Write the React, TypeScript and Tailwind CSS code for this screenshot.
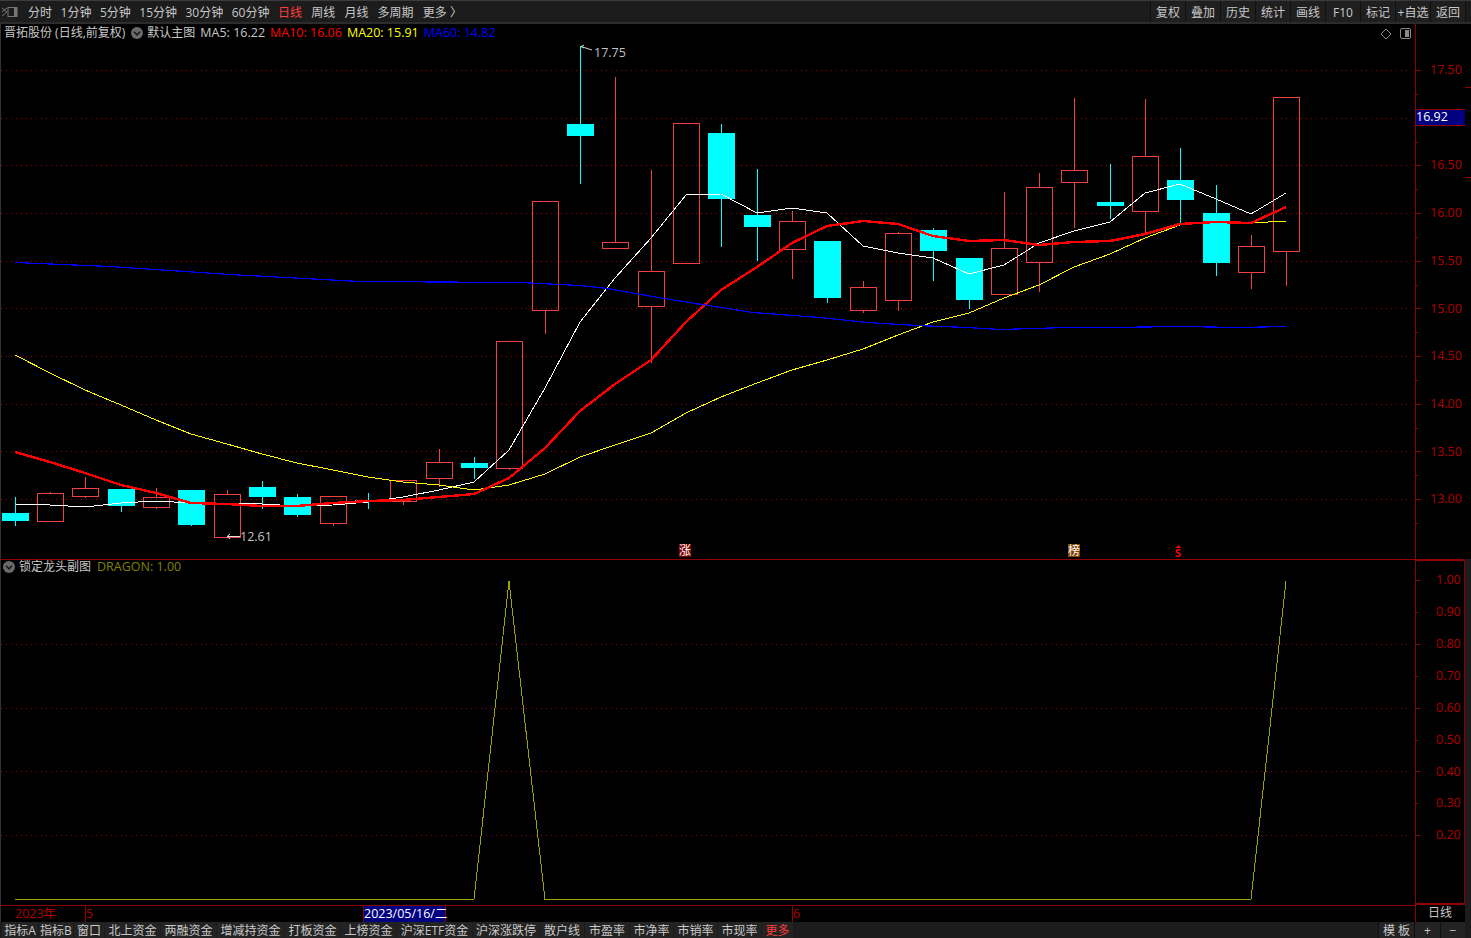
import { FC } from "react";

type Candle = [number, number, number, number, number, "up" | "down"];

// x, wick top, wick bottom, body top, body bottom
const candles: Candle[] = [
  [15, 497, 526, 513, 521, "down"],
  [50, 492, 521, 493, 521, "up"],
  [85, 477, 498, 488, 496, "up"],
  [121, 489, 512, 489, 506, "down"],
  [156, 488, 509, 497, 507, "up"],
  [191, 490, 526, 490, 525, "down"],
  [227, 490, 537, 494, 537, "up"],
  [262, 481, 509, 487, 497, "down"],
  [297, 494, 517, 497, 515, "down"],
  [333, 496, 526, 496, 523, "up"],
  [368, 493, 509, 500, 502, "down"],
  [403, 480, 505, 480, 501, "up"],
  [439, 449, 487, 462, 478, "up"],
  [474, 457, 479, 463, 468, "down"],
  [509, 341, 470, 341, 468, "up"],
  [545, 201, 334, 201, 310, "up"],
  [580, 46, 184, 124, 136, "down"],
  [615, 77, 248, 242, 248, "up"],
  [651, 170, 363, 271, 306, "up"],
  [686, 123, 263, 123, 263, "up"],
  [721, 124, 247, 133, 199, "down"],
  [757, 169, 261, 215, 227, "down"],
  [792, 211, 279, 221, 249, "up"],
  [827, 241, 303, 241, 298, "down"],
  [863, 281, 313, 287, 310, "up"],
  [898, 232, 311, 233, 300, "up"],
  [933, 228, 281, 230, 251, "down"],
  [969, 258, 309, 258, 300, "down"],
  [1004, 192, 294, 248, 294, "up"],
  [1039, 173, 292, 187, 262, "up"],
  [1074, 98, 228, 170, 182, "up"],
  [1110, 164, 219, 202, 206, "down"],
  [1145, 99, 234, 156, 211, "up"],
  [1180, 148, 224, 180, 200, "down"],
  [1216, 185, 276, 213, 263, "down"],
  [1251, 235, 289, 246, 272, "up"],
  [1286, 97, 286, 97, 251, "up"],
];

const ma5 =
  "15,504 50,505 85,507 121,503 156,501 191,503 227,503 262,504 297,506 333,505 368,502 403,497 439,490 474,482 509,450 545,388 580,322 615,278 651,238 686,195 721,194 757,213 792,208 827,213 863,246 898,253 933,258 969,274 1004,265 1039,243 1074,231 1110,222 1145,193 1180,184 1216,199 1251,214 1286,193";
const ma10 =
  "15,452 50,462 85,473 121,485 156,493 191,503 227,504 262,506 297,506 333,503 368,501 403,500 439,497 474,494 509,478 545,448 580,411 615,384 651,360 686,322 721,290 757,267 792,243 827,226 863,221 898,224 933,236 969,241 1004,240 1039,245 1074,242 1110,241 1145,234 1180,224 1216,222 1251,223 1286,207";
const ma20 =
  "15,355 50,373 85,390 121,405 156,420 191,434 227,444 262,454 297,463 333,470 368,477 403,482 439,485 474,490 509,485 545,474 580,457 615,445 651,433 686,413 721,397 757,383 792,370 827,360 863,349 898,335 933,322 969,313 1004,298 1039,285 1074,267 1110,254 1145,238 1180,225 1216,222 1251,223 1286,221";
const ma60 =
  "15,262.5 110,266.5 230,274.5 360,281.5 520,282.5 580,285.5 607,288.5 664,298.5 753,312.5 820,317.5 867,322.5 917,325.5 967,327.5 1000,329.5 1067,327.5 1110,327.5 1180,326.5 1240,327.5 1286,326.5";

const mainGrid = [70, 118, 165, 213, 261, 308, 356, 404, 451, 499];
const mainLabels = ["17.50", "", "16.50", "16.00", "15.50", "15.00", "14.50", "14.00", "13.50", "13.00"];
const subLabels = ["1.00", "0.90", "0.80", "0.70", "0.60", "0.50", "0.40", "0.30", "0.20"];

const periodsA = ["分时", "1分钟", "5分钟", "15分钟", "30分钟", "60分钟"];
const periodsB = ["日线", "周线", "月线", "多周期", "更多 〉"];
const topActions = ["复权", "叠加", "历史", "统计", "画线", "F10", "标记", "+自选", "返回"];

const tabs: [string, string][] = [
  ["指标A", "w-[36px]"],
  ["指标B", "w-[34px]"],
  ["窗口", "w-[30px]"],
  ["北上资金", "w-[55px]"],
  ["两融资金", "w-[55px]"],
  ["增减持资金", "w-[67px]"],
  ["打板资金", "w-[55px]"],
  ["上榜资金", "w-[55px]"],
  ["沪深ETF资金", "w-[75px]"],
  ["沪深涨跌停", "w-[66px]"],
  ["散户线", "w-[44px]"],
  ["市盈率", "w-[44px]"],
  ["市净率", "w-[43px]"],
  ["市销率", "w-[43px]"],
  ["市现率", "w-[43px]"],
  ["更多", "w-[31px] text-[#ff3c3c]"],
];

const CircleChevron: FC = () => (
  <svg width="12" height="12" viewBox="0 0 12 12" className="shrink-0">
    <circle cx="6" cy="6" r="6" fill="#6a6a6a" />
    <path d="M3 4.8 L6 7.8 L9 4.8" fill="none" stroke="#1a1a1a" strokeWidth="1.6" />
  </svg>
);

const DottedGrid: FC<{ rows: number[] }> = ({ rows }) => (
  <g stroke="#a80000" strokeDasharray="1 4" shapeRendering="crispEdges">
    {rows.map((y) => (
      <line key={y} x1="1" x2="1409" y1={y + 0.5} y2={y + 0.5} />
    ))}
  </g>
);

const MainChart: FC = () => (
  <svg width="1414" height="535" viewBox="1 24 1414 535" className="block">
    <DottedGrid rows={mainGrid} />
    {candles.map(([x, top, bottom, bodyTop, bodyBottom, kind]) =>
      kind === "down" ? (
        <g key={x} shapeRendering="crispEdges">
          <rect x={x} y={top} width="1" height={bottom - top} fill="#00ffff" />
          <rect x={x - 13} y={bodyTop} width="27" height={bodyBottom - bodyTop} fill="#00ffff" />
        </g>
      ) : (
        <g key={x} shapeRendering="crispEdges">
          <rect x={x} y={top} width="1" height={bodyTop - top} fill="#f04040" />
          <rect x={x} y={bodyBottom} width="1" height={bottom - bodyBottom} fill="#f04040" />
          <rect
            x={x - 12.5}
            y={bodyTop + 0.5}
            width="26"
            height={bodyBottom - bodyTop}
            fill="none"
            stroke="#f04040"
          />
        </g>
      ),
    )}
    <g fill="none" shapeRendering="crispEdges">
      <polyline points={ma5} stroke="#ffffff" strokeWidth="1" />
      <polyline points={ma20} stroke="#ffff00" strokeWidth="1" />
      <polyline points={ma10} stroke="#ff0000" strokeWidth="2.4" />
      <polyline points={ma60} stroke="#0000ff" strokeWidth="1.2" />
    </g>

    {/* high and low flags */}
    <path d="M592 50 L581 46.5 M584 45 L581 46.5 L584 48" fill="none" stroke="#d0d0d0" />
    <text x="594" y="57" fontSize="12.5" fill="#c4c4c4">17.75</text>
    <path d="M240 536.5 L227 536.5 M230 534 L227 536.5 L230 539" fill="none" stroke="#e0e0e0" />
    <text x="240" y="541" fontSize="12.5" fill="#c4c4c4">12.61</text>

    {/* event markers */}
    <rect x="679" y="544" width="12" height="13" fill="#800000" />
    <text x="679" y="555" fontSize="12" fill="#ffffff">涨</text>
    <rect x="1068" y="544" width="12" height="13" fill="#804000" />
    <text x="1068" y="555" fontSize="12" fill="#ffffff">榜</text>
    <path d="M1178.5 545 L1181.5 548 L1175.5 548 Z" fill="#ff0000" />
    <text x="1175" y="557" fontSize="11" fontWeight="700" fill="#ff0000">S</text>

    {/* view switches, top right */}
    <path d="M1386 29 L1391 34 L1386 39 L1381 34 Z" fill="none" stroke="#8a8a8a" />
    <rect x="1400.5" y="28.5" width="10" height="10" rx="1.5" fill="none" stroke="#8a8a8a" />
    <rect x="1405" y="30" width="4" height="7" fill="#8a8a8a" />
  </svg>
);

const SubChart: FC = () => (
  <svg width="1414" height="345" viewBox="1 560 1414 345" className="block">
    <DottedGrid rows={[644, 708, 771, 835]} />
    <polyline
      points="15,899.5 474,899.5 509,581 545,899.5 1251,899.5 1286,581"
      fill="none"
      stroke="#a0a000"
      strokeWidth="1"
      shapeRendering="crispEdges"
    />
  </svg>
);

const MainAxis: FC = () => (
  <div className="relative w-[50px] h-full border-l border-[#900000] pt-[22.5px] text-[12.5px] text-[#b00000]">
    <svg width="49" height="535" viewBox="1416 24 49 535" className="absolute left-0 top-0">
      <g fill="#900000" shapeRendering="crispEdges">
        {mainGrid.map((y) => (
          <rect key={y} x="1416" y={y} width="5" height="1" />
        ))}
        {mainGrid.map((y) => (
          <rect key={y} x="1416" y={y + 24} width="2" height="1" />
        ))}
      </g>
    </svg>
    {mainLabels.map((label, i) => (
      <div key={i} className="h-[47.7px] flex items-center pl-[14px] leading-none">
        {label}
      </div>
    ))}
    <div className="absolute left-0 top-[85px] w-[49px] h-[17px] bg-[#000080] border-y border-[#900000] text-white text-[12.5px] leading-[14px]">
      16.92
    </div>
  </div>
);

const SubAxis: FC = () => (
  <div className="relative w-[50px] h-full border-l border-t-2 border-b-2 border-r border-[#900000] pt-[3.5px] text-[12.5px] text-[#b00000]">
    <svg width="48" height="341" viewBox="1416 561 48 341" className="absolute left-0 top-0">
      <g fill="#900000" shapeRendering="crispEdges">
        {subLabels.map((label, i) => (
          <rect key={label} x="1416" y={580 + i * 31.9} width={i % 2 === 0 ? 4 : 2} height="1" />
        ))}
      </g>
    </svg>
    {subLabels.map((label) => (
      <div key={label} className="h-[31.9px] flex items-center pl-[20px] leading-none">
        {label}
      </div>
    ))}
  </div>
);

const App: FC = () => {
  return (
    <div className="w-[1471px] h-[938px] overflow-hidden flex flex-col bg-black text-[12px] text-[#c8c8c8] font-['Open_Sans','Noto_Sans_CJK_SC',sans-serif]">
      {/* period bar */}
      <header className="h-[24px] shrink-0 flex items-stretch bg-[#1c1c1c] border-t border-[#3a3a3f] border-b-2 border-b-[#2c2c2c]">
        <svg width="18" height="14" viewBox="0 0 18 14" className="ml-px mt-[4px] shrink-0">
          <path d="M1 3 L6 7 L1 11 M6 3 L1 7" fill="none" stroke="#777" />
          <rect x="7" y="2.5" width="9" height="9" fill="none" stroke="#777" />
          <rect x="13" y="3" width="3" height="8" fill="#777" />
        </svg>
        <nav className="ml-[9px] pt-[2px] flex items-center gap-[8.5px]">
          <div className="flex items-center gap-[8.5px]">
            {periodsA.map((p) => (
              <span key={p}>{p}</span>
            ))}
          </div>
          <div className="flex items-center gap-[9.2px]">
            {periodsB.map((p) => (
              <span key={p} className={p === "日线" ? "text-[#ff3c3c]" : ""}>
                {p}
              </span>
            ))}
          </div>
        </nav>
        <div className="ml-auto mr-[5px] flex items-stretch gap-px bg-[#101010] px-px">
          {topActions.map((a) => (
            <span key={a} className="w-[34px] pt-[2px] flex items-center justify-center whitespace-nowrap bg-[#1f1f1f]">
              {a}
            </span>
          ))}
        </div>
      </header>

      {/* main chart */}
      <section className="h-[535px] shrink-0 flex border-l border-[#333]">
        <div className="relative w-[1414px]">
          <MainChart />
          <div className="absolute left-[3px] top-px h-[16px] flex items-center whitespace-nowrap">
            <span>晋拓股份 (日线,前复权)</span>
            <span className="ml-[6px]"><CircleChevron /></span>
            <span className="ml-[4px]">默认主图</span>
            <span className="ml-[5px] text-[12.5px]">MA5: 16.22</span>
            <span className="ml-[5px] text-[12.5px] text-[#ff0000]">MA10: 16.06</span>
            <span className="ml-[5px] text-[12.5px] text-[#ffff00]">MA20: 15.91</span>
            <span className="ml-[5px] text-[12.5px] text-[#0000ff]">MA60: 14.82</span>
          </div>
        </div>
        <MainAxis />
        <div className="flex-1 relative">
          <div className="absolute left-0 top-[63px] w-full h-px bg-[#900000]" />
          <div className="absolute left-0 top-[153px] w-full h-px bg-[#900000]" />
        </div>
      </section>

      {/* dragon indicator */}
      <section className="h-[346px] shrink-0 flex border-l border-[#333]">
        <div className="relative w-[1414px] border-t border-[#900000]">
          <SubChart />
          <div className="absolute left-[2px] top-0 h-[14px] flex items-center whitespace-nowrap">
            <CircleChevron />
            <span className="ml-[4px]">锁定龙头副图</span>
            <span className="ml-[6px] text-[12.5px] text-[#808000]">DRAGON: 1.00</span>
          </div>
        </div>
        <SubAxis />
        <div className="flex-1 bg-[#1c1c1c]" />
      </section>

      {/* time axis */}
      <section className="h-[17px] shrink-0 flex border-l border-[#333] text-[12.5px] leading-[16px] text-[#b00000]">
        <div className="w-[1414px] flex border-t border-[#900000]">
          <span className="ml-[14px] w-[70px]">2023年</span>
          <span className="w-[278px] border-l border-[#900000]">5</span>
          <span className="w-[83px] bg-[#000080] border-x border-[#900000] text-white text-center whitespace-nowrap">
            2023/05/16/二
          </span>
          <span className="ml-[346px] border-l border-[#900000]">6</span>
        </div>
        <div className="w-[50px] border-l border-[#900000] text-[#c8c8c8] text-[12px] pl-[12px]">日线</div>
        <div className="flex-1 bg-[#1c1c1c]" />
      </section>

      {/* indicator tabs */}
      <footer className="h-[16px] shrink-0 flex items-stretch bg-[#1c1c1c] pl-[2px] leading-[17px]">
        <div className="flex gap-px">
          {tabs.map(([label, size]) => (
            <span key={label} className={`${size} bg-[#232323] text-center whitespace-nowrap`}>
              {label}
            </span>
          ))}
        </div>
        <div className="ml-auto mr-[6px] flex gap-px bg-[#101010] pl-px">
          <span className="w-[35px] bg-[#232323] text-center">模 板</span>
          <span className="w-[25px] bg-[#232323] text-center">+</span>
          <span className="w-[24px] bg-[#232323] text-center">−</span>
        </div>
      </footer>
    </div>
  );
};

export default App;
